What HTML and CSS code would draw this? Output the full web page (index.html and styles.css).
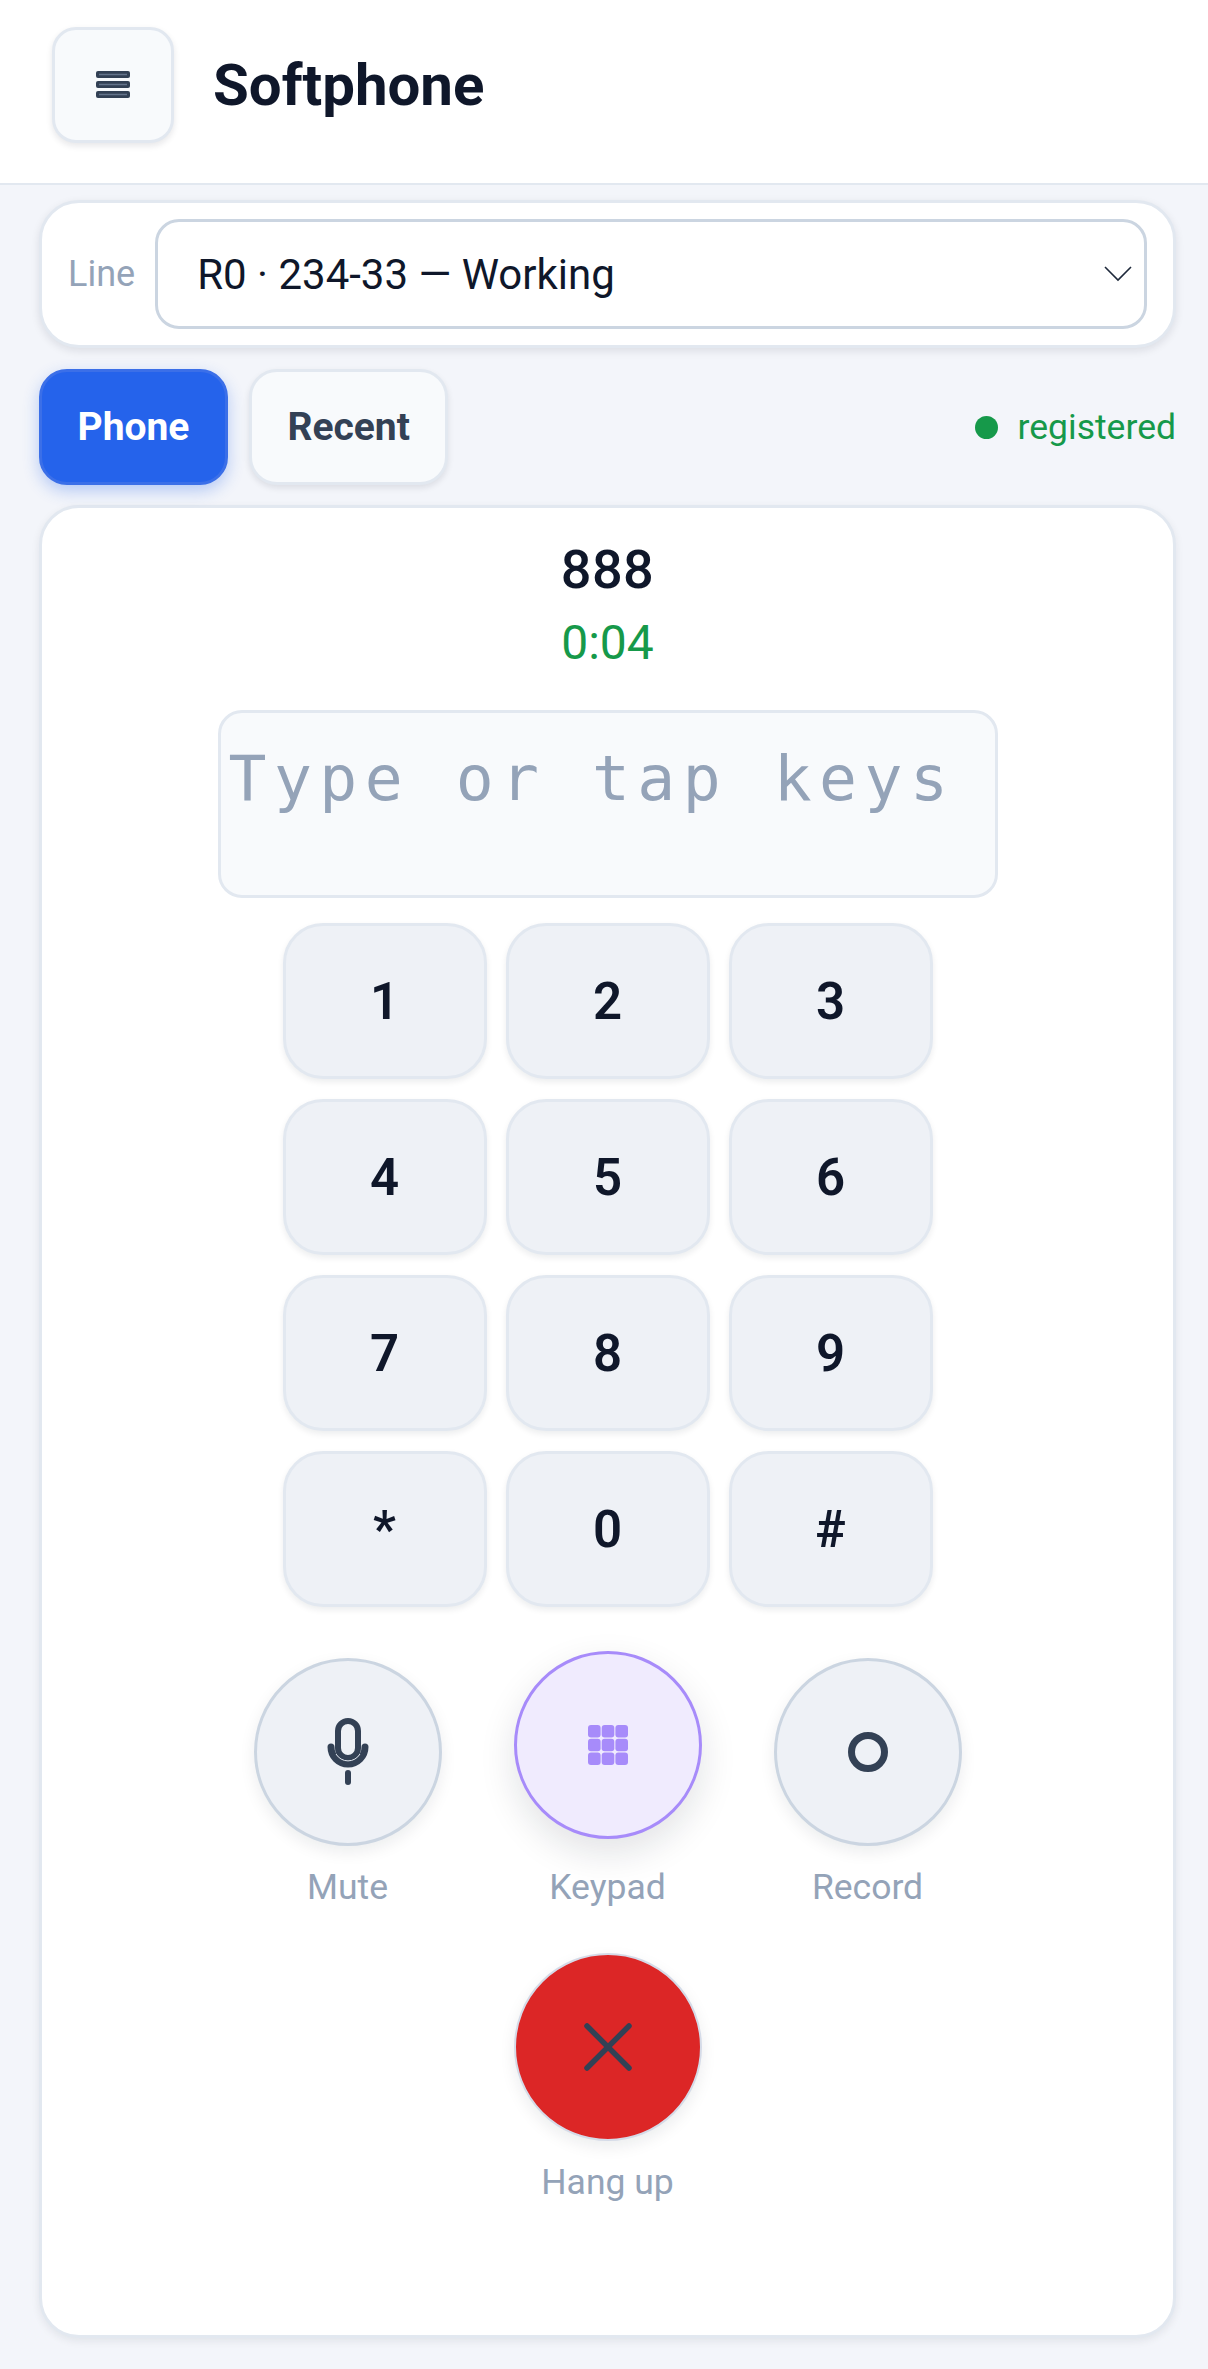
FILE: index.html
```html
<!DOCTYPE html>
<html lang="en">
<head>
  <meta charset="utf-8" />
  <title>Softphone</title>
  <link rel="stylesheet" href="styles.css">
</head>
<body>
  <header class="topbar">
    <button class="menu-btn">
      <svg width="34" height="27" viewBox="0 0 34 27"><g fill="#334155"><rect width="34" height="7" rx="2" /><rect width="34" height="7" y="10" rx="2" /><rect width="34" height="7" y="20" rx="2" /></g><path d="M3 3.5h28M3 13.5h28M3 23.5h28" stroke="#64748b" stroke-width="1.4" /></svg>
    </button>
    <h1>Softphone</h1>
  </header>
  <main class="content">
    <div class="line-card">
      <span class="line-label">Line</span>
      <div class="line-select">
        <span>R0 · 234-33 — Working</span>
        <svg width="28" height="16" viewBox="0 0 28 16"><path d="M1 1l13 13L27 1" fill="none" stroke="#1e293b" stroke-width="1.6" /></svg>
      </div>
    </div>
    <div class="tabs">
      <button class="tab tab-active">Phone</button>
      <button class="tab">Recent</button>
      <div class="status"><i class="dot"></i>registered</div>
    </div>
    <section class="phone">
      <div class="call-number">888</div>
      <div class="call-time">0:04</div>
      <div class="dial-input">Type or tap keys</div>
      <div class="keys">
        <button class="key">1</button>
        <button class="key">2</button>
        <button class="key">3</button>
        <button class="key">4</button>
        <button class="key">5</button>
        <button class="key">6</button>
        <button class="key">7</button>
        <button class="key">8</button>
        <button class="key">9</button>
        <button class="key">*</button>
        <button class="key">0</button>
        <button class="key">#</button>
      </div>
      <div class="actions">
        <div class="action">
          <div class="round">
            <svg width="42" height="68" viewBox="0 0 42 68"><rect x="11" y="3" width="20" height="37" rx="10" fill="none" stroke="#334155" stroke-width="6" /><path d="M4 29a17 17 0 0 0 34 0" fill="none" stroke="#334155" stroke-width="7" stroke-linecap="round" /><path d="M9 36a13.9 13.9 0 0 0 24 0" fill="none" stroke="#e2e8f0" stroke-width="1" /><path d="M21 55v9" stroke="#334155" stroke-width="6" stroke-linecap="round" /></svg>
          </div>
          <span>Mute</span>
        </div>
        <div class="action">
          <div class="round round-on">
            <svg width="40" height="40" viewBox="0 0 40 40" fill="#a78bfa"><rect width="12.6" height="12.6" rx="3" /><rect x="13.7" width="12.6" height="12.6" rx="3" /><rect x="27.4" width="12.6" height="12.6" rx="3" /><rect y="13.7" width="12.6" height="12.6" rx="3" /><rect x="13.7" y="13.7" width="12.6" height="12.6" rx="3" /><rect x="27.4" y="13.7" width="12.6" height="12.6" rx="3" /><rect y="27.4" width="12.6" height="12.6" rx="3" /><rect x="13.7" y="27.4" width="12.6" height="12.6" rx="3" /><rect x="27.4" y="27.4" width="12.6" height="12.6" rx="3" /></svg>
          </div>
          <span>Keypad</span>
        </div>
        <div class="action">
          <div class="round">
            <svg width="40" height="40" viewBox="0 0 40 40"><circle cx="20" cy="20" r="16.5" fill="none" stroke="#334155" stroke-width="7" /></svg>
          </div>
          <span>Record</span>
        </div>
      </div>
      <div class="action hangup">
        <div class="round round-end">
          <svg width="50" height="50" viewBox="0 0 50 50"><path d="M4 4l42 42M46 4L4 46" stroke="#334155" stroke-width="5.5" stroke-linecap="round" /></svg>
        </div>
        <span>Hang up</span>
      </div>
    </section>
  </main>
</body>
</html>
```
FILE: styles.css
```css
* {
  box-sizing: border-box;
}

body {
  margin: 0;
  height: 2369px;
  background: #f3f5fa;
  font-family: Roboto, "Noto Sans", sans-serif;
  color: #0f172a;
}

button {
  font-family: inherit;
}

.topbar {
  display: flex;
  align-items: center;
  gap: 39px;
  height: 185px;
  padding: 0 52px 14px;
  background: #fff;
  border-bottom: 2px solid #e2e8f0;
}

.topbar h1 {
  margin: 0;
  font-size: 58.2px;
  font-weight: 700;
}

.menu-btn {
  display: flex;
  align-items: center;
  justify-content: center;
  width: 122px;
  height: 116px;
  padding: 0;
  background: #f8fafc;
  border: 3px solid #e2e8f0;
  border-radius: 24px;
  box-shadow: 0 3px 6px rgba(15, 23, 42, 0.1);
}

.content {
  padding: 15px 32px 0 39px;
}

.line-card {
  display: flex;
  align-items: center;
  gap: 20px;
  height: 148px;
  padding: 0 26px;
  background: #fff;
  border: 3px solid #e2e8f0;
  border-radius: 40px;
  box-shadow: 0 3px 8px rgba(15, 23, 42, 0.1);
}

.line-label {
  font-size: 36px;
  color: #94a3b8;
}

.line-select {
  flex: 1;
  display: flex;
  align-items: center;
  justify-content: space-between;
  height: 110px;
  padding: 0 12px 0 39px;
  font-size: 42px;
  border: 3px solid #cbd5e1;
  border-radius: 24px;
}

.tabs {
  display: flex;
  align-items: center;
  gap: 21px;
  margin-top: 21px;
}

.tab {
  height: 116px;
  padding: 0 35.5px;
  font-size: 39px;
  font-weight: 700;
  color: #334155;
  background: #f8fafc;
  border: 3px solid #e2e8f0;
  border-radius: 28px;
  box-shadow: 0 3px 6px rgba(15, 23, 42, 0.1);
}

.tab-active {
  color: #fff;
  background: #2563eb;
  border-color: #3b6fe8;
  box-shadow: 0 6px 16px rgba(37, 99, 235, 0.3);
}

.status {
  margin-left: auto;
  display: flex;
  align-items: center;
  gap: 20px;
  font-size: 35.5px;
  color: #16994a;
}

.dot {
  width: 23px;
  height: 23px;
  border-radius: 50%;
  background: #16994a;
}

.phone {
  display: flex;
  flex-direction: column;
  align-items: center;
  height: 1833px;
  margin-top: 20px;
  background: #fff;
  border: 3px solid #e2e8f0;
  border-radius: 40px;
  box-shadow: 0 3px 8px rgba(15, 23, 42, 0.08);
}

.call-number {
  margin-top: 30px;
  font-size: 54px;
  font-weight: 500;
  letter-spacing: 0.5px;
}

.call-time {
  margin-top: 13px;
  font-size: 48px;
  color: #16994a;
}

.dial-input {
  width: 780px;
  height: 188px;
  margin-top: 39px;
  padding: 29px 8px;
  font-family: "DejaVu Sans Mono", monospace;
  font-size: 63px;
  letter-spacing: 7.5px;
  color: #94a3b8;
  white-space: nowrap;
  background: #f8fafc;
  border: 3px solid #e2e8f0;
  border-radius: 24px;
}

.keys {
  display: grid;
  grid-template-columns: repeat(3, 204px);
  grid-auto-rows: 156px;
  gap: 20px 19px;
  margin-top: 25px;
}

.key {
  font-size: 51px;
  font-weight: 600;
  color: #0f172a;
  background: #eef1f6;
  border: 3px solid #e2e8f0;
  border-radius: 40px;
  box-shadow: 0 3px 6px rgba(15, 23, 42, 0.08);
}

.actions {
  display: flex;
  align-items: flex-end;
  gap: 72px;
  margin-top: 51px;
}

.action {
  display: flex;
  flex-direction: column;
  align-items: center;
  gap: 20px;
  font-size: 35.5px;
  color: #94a3b8;
}

.round {
  display: flex;
  align-items: center;
  justify-content: center;
  width: 188px;
  height: 188px;
  background: #eef1f6;
  border: 3px solid #cbd5e1;
  border-radius: 50%;
  box-shadow: 0 6px 16px rgba(15, 23, 42, 0.08);
}

.round-on {
  background: #f0ebfe;
  border-color: #a78bfa;
  box-shadow: 0 14px 36px rgba(15, 23, 42, 0.12);
  transform: translateY(-7px);
}

.round-end {
  background: #dc2626;
  border: 2px solid #d5dbe8;
}

.hangup {
  margin-top: 45px;
}
```
